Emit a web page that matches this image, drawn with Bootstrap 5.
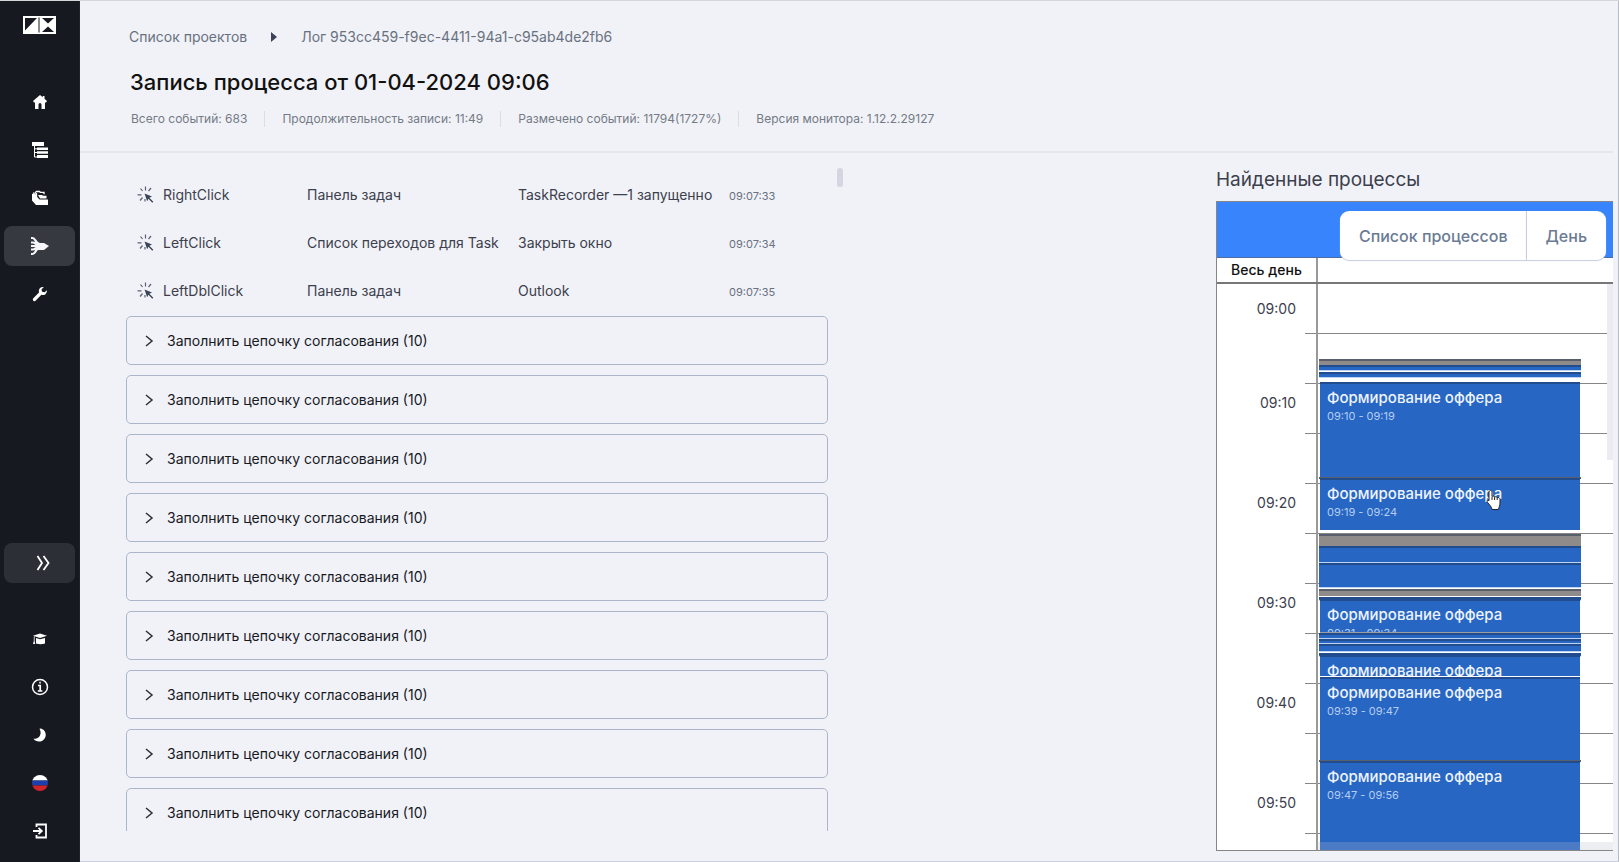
<!DOCTYPE html>
<html lang="ru">
<head>
<meta charset="utf-8">
<meta name="viewport" content="width=device-width, initial-scale=1">
<title>Запись процесса</title>
<link href="https://cdn.jsdelivr.net/npm/bootstrap@5.3.0/dist/css/bootstrap.min.css" rel="stylesheet">
<style>
  :root { --page: #f1f2f7; --ink: #3c404d; --slate: #68717f; --line: #868686; --event: #2866c3; }
  body { font-family: Inter, "Noto Sans", sans-serif; background: var(--page); color: var(--ink); font-size: 14px; line-height: 20px; }
  .app { height: 100vh; border-top: 1px solid #d5d6d8; }
  .side { width: 80px; background: #171920; padding: 15px 4px 11px; border-right: 1px solid #20222a; flex: none; }
  .side-logo { height: 18px; margin-bottom: 48px; }
  .side a, .side button { height: 40px; border-radius: 8px; color: #fff; background: none; border: 0; padding: 0; flex: none; }
  .side .is-active { background: #373940; }
  .side .side-toggle { background: #2c2f36; margin-bottom: 28px; padding-left: 6px; }
  .main-area { min-width: 0; border-right: 1px solid #b9bbc2; border-bottom: 1px solid #cdd0db; padding-right: 5px; }
  .page-head { padding: 26px 0 24px 49px; border-bottom: 2px solid #e5e7ed; }
  .crumbs a { color: var(--slate); text-decoration: none; }
  .crumbs { gap: 24px; }
  h1 { font-size: 22px; line-height: 30px; font-weight: 500; color: #111; margin: 20px 0 14px; padding-left: 1px; }
  .meta { font-size: 12px; color: #747b86; line-height: 16px; }
  .meta li { padding: 0 17px; border-left: 1px solid #dcdee5; }
  .meta li:first-child { border: 0; padding-left: 2px; }
  .work { min-height: 0; }
  .log { width: 45.8%; margin: 16px 0 30px 46px; min-height: 0; overflow: hidden; padding-top: 2px; }
  .log-body { min-height: 0; overflow: hidden; }
  .log-table { table-layout: fixed; width: 100%; margin-bottom: 1px; }
  .log-table td { height: 48px; padding: 0 10px 0 0; vertical-align: middle; }
  .log-table td:first-child { padding-left: 11px; width: 181px; }
  .clip-text { overflow: hidden; white-space: nowrap; }
  .log-table .col-text { width: 211px; }
  .log-table time { font-size: 11px; color: var(--slate); }
  .step { height: 49px; flex: none; margin-bottom: 10px; border: 1px solid #abb6ca; border-radius: 5px; background: none; color: #17191f; font-size: 14px; padding: 0 17px; gap: 13px; }
  .thumb { width: 6px; height: 19px; border-radius: 3px; background: #d3d6e1; margin: 15px 0 0 9px; }
  .found { width: 397px; flex: none; padding-bottom: 10px; }
  h2 { font-size: 19px; line-height: 24px; font-weight: 400; margin: 15px 0 9px; }
  .cal { border: 1px solid var(--line); border-right: 0; background: #fff; min-height: 0; overflow: hidden; }
  .cal-head { height: 56px; flex: none; background: #3784fd; border-bottom: 1px solid #4c6da1; box-shadow: 0 -1px 0 #2f5a9d; }
  .cal-switch { position: absolute; top: 9px; right: 7px; z-index: 2; }
  .cal-switch .btn { height: 49px; background: #fff; color: #6b7b93; font-weight: 500; font-size: 16px; padding: 0 19px; border: 0; border-radius: 9px; box-shadow: 0 1px 1px #c9ccdf; }
  .cal-switch .btn + .btn { border-left: 1px solid #c9cedd; }
  .cal-day { height: 26px; flex: none; border-bottom: 2px solid #777; font-weight: 500; color: #111; }
  .cal-day div:first-child, .hours { width: 101px; flex: none; border-right: 2px solid #999; }
  .cal-body { min-height: 0; overflow: hidden; }
  .hours div { height: 100px; padding: 9px 20px 0 0; text-align: right; background: linear-gradient(var(--line), var(--line)) right 49px / 11px 1px no-repeat, linear-gradient(var(--line), var(--line)) right 99px / 11px 1px no-repeat; }
  .hours div:first-child { padding-top: 15px; }
  .slots { background: repeating-linear-gradient(#fff 0 49px, var(--line) 49px 50px); height: 600px; }
  .ev { position: absolute; left: 1px; right: 32px; background: var(--event); border: 0; border-top: 2px solid #214d8e; border-bottom: 1px solid #bcd4f3; color: #fff; overflow: hidden; padding: 4px 0 0 7px; text-align: left; }
  .ev-full { left: 2px; right: 33px; border-bottom: 0; }
  .ev-edge { border-bottom: 1px solid #9a9da3; }
  .ev-gray { background: #8f8b8b; border-top-color: #5a5f6c; border-bottom: 0; }
  .ev-thin { padding-top: 0; }
  .ev b { display: block; font-weight: 500; font-size: 15px; color: #edf4ff; }
  .ev span { display: block; font-size: 11px; line-height: 16px; color: #b5cdf2; }
  .vbar { position: absolute; right: 0; top: 0; width: 6px; height: 176px; background: #ecebf1; }
  .hbar { position: absolute; left: 100px; right: 0; bottom: 0; height: 8px; background: #b9bbcc; opacity: .25; }
  .pointer { position: absolute; left: 168px; top: 205px; }
</style>
</head>
<body>
<div class="app d-flex">
  <nav class="side d-flex flex-column" aria-label="Меню">
    <div class="side-logo text-center"><svg class="d-block mx-auto" width="33" height="18" viewBox="0 0 33 18"><path fill="#fff" d="M0 0h33v18H0z"/><path fill="#171920" d="M2 2h12L2 14.500zM15.500 1.500h1v15h-1zM19 2h12l-6 5.500zM19 16h12l-6-5.500z"/></svg></div>
    <div class="d-flex flex-column gap-2">
      <a class="d-flex align-items-center justify-content-center" href="#" aria-label="Главная"><svg width="16" height="16" viewBox="0 0 16 16" fill="#fff"><path d="M8 1 1 7l1 1.500h1V15h3.500v-4.500a1.500 1.500 0 0 1 3 0V15H13V8.500h1L15 7 12.500 4.800V2h-1.800v1.300z"/></svg></a>
      <a class="d-flex align-items-center justify-content-center" href="#" aria-label="Проекты"><svg width="18" height="18" viewBox="0 0 18 18" fill="#fff"><path d="M1 1h12v4H1zM6 6.500h11V9H6zM6 10.200h11v2.600H6zM6 14h11v3H6z"/><path d="M3.500 5v11H6M3.500 7.800H6M3.500 11.500H6" fill="none" stroke="#fff"/></svg></a>
      <a class="d-flex align-items-center justify-content-center" href="#" aria-label="Папки"><svg width="18" height="16" viewBox="0 0 18 16" fill="#fff"><path d="M1 4v6.500l4 4.500h12V9.500H8.500L3.500 4z"/><path d="M7 5h4l1 .8h3.500V8.500H9z"/><path fill="none" stroke="#fff" stroke-width="1.300" d="M2 2.800 5.500 6V3.800L4.300 2.500 5.500 1.500h3l.8.8H13v2"/></svg></a>
      <a class="is-active d-flex align-items-center justify-content-center" href="#" aria-label="Процессы"><svg width="20" height="20" viewBox="0 0 20 20" fill="none" stroke="#f6f6fa" stroke-width="2.200"><path d="M1 2h1.500C6 2 5 8 10 8M1 6.500h2c2 0 3 2.500 6 2.500M1 13.500h2c2 0 3-2.500 6-2.500M1 18h1.500C6 18 5 12 10 12M1 10h9"/><path fill="#f6f6fa" stroke="none" d="M8 7h6l5 3-5 4H8z"/></svg></a>
      <a class="d-flex align-items-center justify-content-center" href="#" aria-label="Настройки"><svg width="16" height="16" viewBox="0 0 16 16"><path fill="#fff" d="M15 4.300a4.200 4.200 0 0 1-5.600 4.500L3.800 14.600A1.600 1.600 0 0 1 1.300 12.200L7 6.500A4.200 4.200 0 0 1 11.800 1L9.500 3.400l.6 2.300 2.500.6z"/></svg></a>
    </div>
    <div class="mt-auto d-flex flex-column gap-2">
      <button class="side-toggle d-flex align-items-center justify-content-center" type="button" aria-label="Развернуть"><svg width="14" height="16" viewBox="0 0 14 16" fill="none" stroke="#fff" stroke-width="1.800"><path d="m1.500 1 4.500 7-4.500 7M7.500 1l5 7-5 7"/></svg></button>
      <a class="d-flex align-items-center justify-content-center" href="#" aria-label="Обучение"><svg width="14" height="12" viewBox="0 0 14 12" fill="#fff"><path d="M0 2.700 7 .5l7 2.200L7 5zM3 5l4 1.300L12 5v5.500c-3 1-6 1-9 0zM.8 3.500h.8V8l.6 3H0l.8-3z"/></svg></a>
      <a class="d-flex align-items-center justify-content-center" href="#" aria-label="Информация"><svg width="18" height="18" viewBox="0 0 18 18" fill="none" stroke="#fff" stroke-width="1.500"><circle cx="9" cy="9" r="7.500"/><path stroke-width="1.700" d="M7 7.500h2.200V13M6.800 13h4.600M8.300 4.700h1.500"/></svg></a>
      <button class="d-flex align-items-center justify-content-center" type="button" aria-label="Тёмная тема"><svg width="14" height="14" viewBox="0 0 14 14"><path fill="#fff" d="M8 .5a6.700 6.700 0 1 1-7.500 10.200C6 11.500 9.500 6 6.500.8z"/></svg></button>
      <button class="d-flex align-items-center justify-content-center" type="button" aria-label="Русский"><svg width="16" height="16" viewBox="0 0 16 16"><defs><clipPath id="flag"><circle cx="8" cy="8" r="8"/></clipPath></defs><g clip-path="url(#flag)"><path fill="#fff" d="M0 0h16v5.500H0z"/><path fill="#1d3fae" d="M0 5.500h16v5H0z"/><path fill="#d0232b" d="M0 10.500h16V16H0z"/></g></svg></button>
      <a class="d-flex align-items-center justify-content-center" href="#" aria-label="Выход"><svg width="16" height="16" viewBox="0 0 16 16" fill="none" stroke="#fff" stroke-width="1.800"><path d="M4.500 4V1.500H14v13H4.500V12M1 8h8M6.500 4.800 9.800 8l-3.300 3.200"/></svg></a>
    </div>
  </nav>

  <main class="main-area flex-grow-1 d-flex flex-column">
    <header class="page-head">
      <nav class="crumbs d-flex align-items-center" aria-label="Путь">
        <a href="#">Список проектов</a>
        <svg width="6" height="10" viewBox="0 0 6 10"><path fill="#3b4358" d="M0 0v10l6-5z"/></svg>
        <a href="#">Лог 953cc459-f9ec-4411-94a1-c95ab4de2fb6</a>
      </nav>
      <h1>Запись процесса от 01-04-2024 09:06</h1>
      <ul class="meta list-unstyled d-flex mb-0">
        <li>Всего событий: 683</li>
        <li>Продолжительность записи: 11:49</li>
        <li>Размечено событий: 11794(1727%)</li>
        <li>Версия монитора: 1.12.2.29127</li>
      </ul>
    </header>

    <div class="work flex-grow-1 d-flex">
      <section class="log d-flex flex-column flex-shrink-0">
        <table class="log-table">
          <tbody>
            <tr><td><div class="d-flex align-items-center gap-2"><svg width="18" height="18" viewBox="0 0 18 18"><use href="#click"/></svg>RightClick</div></td><td class="col-text"><div class="clip-text">Панель задач</div></td><td class="col-text"><div class="clip-text">TaskRecorder —1 запущенно</div></td><td><time>09:07:33</time></td></tr>
            <tr><td><div class="d-flex align-items-center gap-2"><svg width="18" height="18" viewBox="0 0 18 18"><use href="#click"/></svg>LeftClick</div></td><td class="col-text"><div class="clip-text">Список переходов для Task</div></td><td class="col-text"><div class="clip-text">Закрыть окно</div></td><td><time>09:07:34</time></td></tr>
            <tr><td><div class="d-flex align-items-center gap-2"><svg width="18" height="18" viewBox="0 0 18 18"><use href="#click"/></svg>LeftDblClick</div></td><td class="col-text"><div class="clip-text">Панель задач</div></td><td class="col-text"><div class="clip-text">Outlook</div></td><td><time>09:07:35</time></td></tr>
          </tbody>
        </table>
        <div class="log-body flex-grow-1 d-flex flex-column">
          <button type="button" class="step d-flex align-items-center"><svg width="10" height="12" viewBox="0 0 10 12"><use href="#chev"/></svg>Заполнить цепочку согласования (10)</button>
          <button type="button" class="step d-flex align-items-center"><svg width="10" height="12" viewBox="0 0 10 12"><use href="#chev"/></svg>Заполнить цепочку согласования (10)</button>
          <button type="button" class="step d-flex align-items-center"><svg width="10" height="12" viewBox="0 0 10 12"><use href="#chev"/></svg>Заполнить цепочку согласования (10)</button>
          <button type="button" class="step d-flex align-items-center"><svg width="10" height="12" viewBox="0 0 10 12"><use href="#chev"/></svg>Заполнить цепочку согласования (10)</button>
          <button type="button" class="step d-flex align-items-center"><svg width="10" height="12" viewBox="0 0 10 12"><use href="#chev"/></svg>Заполнить цепочку согласования (10)</button>
          <button type="button" class="step d-flex align-items-center"><svg width="10" height="12" viewBox="0 0 10 12"><use href="#chev"/></svg>Заполнить цепочку согласования (10)</button>
          <button type="button" class="step d-flex align-items-center"><svg width="10" height="12" viewBox="0 0 10 12"><use href="#chev"/></svg>Заполнить цепочку согласования (10)</button>
          <button type="button" class="step d-flex align-items-center"><svg width="10" height="12" viewBox="0 0 10 12"><use href="#chev"/></svg>Заполнить цепочку согласования (10)</button>
          <button type="button" class="step d-flex align-items-center"><svg width="10" height="12" viewBox="0 0 10 12"><use href="#chev"/></svg>Заполнить цепочку согласования (10)</button>
        </div>
      </section>
      <div class="thumb"></div>

      <section class="found d-flex flex-column ms-auto">
        <h2>Найденные процессы</h2>
        <div class="cal position-relative flex-grow-1 d-flex flex-column">
          <div class="cal-head"></div>
          <div class="cal-switch btn-group">
            <button type="button" class="btn">Список процессов</button>
            <button type="button" class="btn">День</button>
          </div>
          <div class="cal-day d-flex"><div class="d-flex align-items-center justify-content-center">Весь день</div></div>
          <div class="cal-body flex-grow-1 d-flex position-relative">
            <div class="hours"><div>09:00</div><div>09:10</div><div>09:20</div><div>09:30</div><div>09:40</div><div>09:50</div></div>
            <div class="slots flex-grow-1 position-relative">
              <div class="ev ev-thin ev-gray" style="top:75px;height:6px"></div>
              <div class="ev ev-thin" style="top:81px;height:6px"></div>
              <div class="ev ev-thin" style="top:88px;height:6px"></div>
              <div class="ev ev-full" style="top:98px;height:96px"><b>Формирование оффера</b><span>09:10 - 09:19</span></div>
              <div class="ev ev-thin ev-gray" style="top:193px;height:2px"></div>
              <div class="ev ev-full" style="top:194px;height:52px"><b>Формирование оффера</b><span>09:19 - 09:24</span></div>
              <div class="ev ev-thin ev-gray" style="top:250px;height:12px"></div>
              <div class="ev ev-thin" style="top:262px;height:17px"></div>
              <div class="ev ev-thin" style="top:279px;height:25px"></div>
              <div class="ev ev-thin ev-gray" style="top:305px;height:7px"></div>
              <div class="ev ev-thin" style="top:313px;height:4px"></div>
              <div class="ev ev-full ev-edge" style="top:315px;height:34px"><b>Формирование оффера</b><span>09:31 - 09:34</span></div>
              <div class="ev ev-thin" style="top:349px;height:6px"></div>
              <div class="ev ev-thin" style="top:355px;height:5px"></div>
              <div class="ev ev-thin" style="top:360px;height:8px"></div>
              <div class="ev ev-thin" style="top:369px;height:4px"></div>
              <div class="ev ev-full" style="top:371px;height:21px"><b>Формирование оффера</b></div>
              <div class="ev ev-full" style="top:393px;height:83px"><b>Формирование оффера</b><span>09:39 - 09:47</span></div>
              <div class="ev ev-thin ev-gray" style="top:476px;height:2px"></div>
              <div class="ev ev-full" style="top:477px;height:93px"><b>Формирование оффера</b><span>09:47 - 09:56</span></div>
              <svg class="pointer" width="16" height="22" viewBox="0 0 16 22"><path fill="#fff" stroke="#222" stroke-width="1" d="M4.500 1.500c1.200 0 1.500.7 1.500 1.500v4.500c1-.8 2.300-.4 2.600.5 1-.7 2.200-.2 2.500.7 1.200-.7 2.900.1 2.900 1.800V14c0 3-1 3.500-1.500 6.500H6.200C5.500 17.500 3 15.500 1.500 13.300c-1.300-2 .5-2.800 1.500-1.600V3c0-.8.400-1.500 1.500-1.500zM6 8v3M8.600 8v3M11.200 9v2"/></svg>
            </div>
            <div class="vbar"></div>
            <div class="hbar"></div>
          </div>
        </div>
      </section>
    </div>
  </main>
</div>
<svg width="0" height="0" class="position-absolute" aria-hidden="true">
  <defs>
    <g id="click"><path fill="#3b4358" d="m7.500 7.500 7.500 2.900-2.600 1.400 3.900 3.900-1 1-3.900-3.900-1.200 2.400z"/><path fill="none" stroke="#596074" stroke-width="1.200" d="M8.500.5v4M3.500 2.500 5.500 5M14 2l-2.500 3M.5 8.800h4M3 14.500 5.500 11.500M8 13v2.500"/></g>
    <path id="chev" fill="none" stroke="#2b2e36" stroke-width="1.500" d="m2 1 6 5-6 5"/>
  </defs>
</svg>
<script src="https://cdn.jsdelivr.net/npm/bootstrap@5.3.0/dist/js/bootstrap.bundle.min.js"></script>
</body>
</html>
